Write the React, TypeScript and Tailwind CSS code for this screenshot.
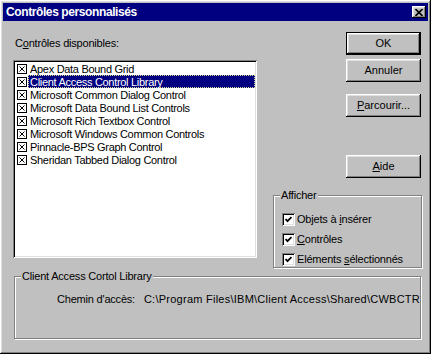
const CONTROLS = [
  "Apex Data Bound Grid",
  "Client Access Control Library",
  "Microsoft Common Dialog Control",
  "Microsoft Data Bound List Controls",
  "Microsoft Rich Textbox Control",
  "Microsoft Windows Common Controls",
  "Pinnacle-BPS Graph Control",
  "Sheridan Tabbed Dialog Control",
];

const RAISED =
  "shadow-[inset_-1px_-1px_0_#000,inset_1px_1px_0_#fff,inset_-2px_-2px_0_#808080,inset_2px_2px_0_#dfdfdf]";
const SUNKEN =
  "shadow-[inset_1px_1px_0_#808080,inset_-1px_-1px_0_#fff,inset_2px_2px_0_#000,inset_-2px_-2px_0_#dfdfdf]";

function BoxGlyph() {
  // the little crossed box in front of each list entry
  return (
    <svg width="10" height="10" viewBox="0 0 10 10" className="shrink-0">
      <rect x="0.5" y="0.5" width="9" height="9" fill="#fff" stroke="#000" />
      <path d="M2.5 2.5 L7.5 7.5 M7.5 2.5 L2.5 7.5" stroke="#000" strokeWidth="1" />
    </svg>
  );
}

function Button({
  children,
  primary = false,
  className = "",
}: {
  children: React.ReactNode;
  primary?: boolean;
  className?: string;
}) {
  return (
    <button
      className={`w-[75px] h-[23px] bg-[#c0c0c0] text-black text-[11px] leading-none ${RAISED} ${
        primary ? "border border-black" : ""
      } ${className}`}
    >
      {children}
    </button>
  );
}

function Check({ children }: { children: React.ReactNode }) {
  return (
    <div className="flex items-center h-[13px]">
      <div className={`w-[13px] h-[13px] bg-white flex items-center justify-center ${SUNKEN}`}>
        <svg width="7" height="7" viewBox="0 0 7 7">
          <path d="M0.5 3 L2.5 5.2 L6.5 1" stroke="#000" strokeWidth="1.8" fill="none" />
        </svg>
      </div>
      <span className="ml-[2px] text-[11px] leading-[13px] tracking-[-0.2px]">{children}</span>
    </div>
  );
}

function Group({ title, className, children }: { title: string; className: string; children: React.ReactNode }) {
  return (
    <div
      className={`relative border border-[#808080] shadow-[inset_1px_1px_0_#fff,1px_1px_0_#fff] ${className}`}
    >
      <span className="absolute -top-[7px] left-[6px] px-[1px] bg-[#c0c0c0] text-[11px] leading-[13px] tracking-[-0.2px]">
        {title}
      </span>
      {children}
    </div>
  );
}

export default function App() {
  return (
    <div className="w-[435px] h-[357px] bg-white font-['Liberation_Sans',Arial,sans-serif] text-black">
      <div className={`w-[431px] h-[354px] bg-[#c0c0c0] flex flex-col pt-[3px] ${RAISED}`}>
        {/* title bar */}
        <div className="mx-[3px] h-[18px] bg-[#000080] flex items-center pl-[3px] pr-[2px]">
          <span className="text-white font-bold text-[12px] leading-none tracking-[-0.4px]">
            Contrôles personnalisés
          </span>
          <div className={`ml-auto w-[14px] h-[12px] bg-[#c0c0c0] flex items-center justify-center ${RAISED}`}>
            <svg width="8" height="7" viewBox="0 0 8 7">
              <path d="M0.5 0 L7.5 7 M7.5 0 L0.5 7" stroke="#000" strokeWidth="1.6" />
            </svg>
          </div>
        </div>

        <div className="flex">
          {/* left: list */}
          <div className="ml-[13px] w-[244px] pt-[16px]">
            <div className="pl-[2px] text-[11px] leading-[13px] tracking-[-0.2px]">
              C<span className="underline">o</span>ntrôles disponibles:
            </div>
            <div className={`mt-[10px] h-[198px] bg-white p-[2px] ${SUNKEN}`}>
              {CONTROLS.map((c, i) => (
                <div key={c} className="flex items-center h-[13px] pl-[2px]">
                  <BoxGlyph />
                  <span
                    className={`ml-[1px] flex-1 h-[13px] pl-[1px] text-[11px] leading-[12px] tracking-[-0.3px] whitespace-nowrap ${
                      i === 1
                        ? "bg-[#000080] text-white border border-dotted border-[#d8d890]"
                        : "border border-transparent"
                    }`}
                  >
                    {c}
                  </span>
                </div>
              ))}
            </div>
          </div>

          {/* right: buttons and options */}
          <div className="ml-[16px] w-[149px] pt-[11px] flex flex-col items-end">
            <Button primary className="mr-[1px]">OK</Button>
            <Button className="mt-[4px] mr-[1px]">Annuler</Button>
            <Button className="mt-[12px] mr-[1px]">
              <span className="underline">P</span>arcourir...
            </Button>
            <Button className="mt-[38px] mr-[1px]">
              <span className="underline">A</span>ide
            </Button>
            <Group title="Afficher" className="mt-[17px] w-[149px] h-[73px]">
              <div className="pl-[8px] pt-[17px] flex flex-col gap-[7px]">
                <Check>
                  Objets à <span className="underline">i</span>nsérer
                </Check>
                <Check>
                  <span className="underline">C</span>ontrôles
                </Check>
                <Check>
                  Eléments <span className="underline">s</span>électionnés
                </Check>
              </div>
            </Group>
          </div>
        </div>

        <Group title="Client Access Cortol Library" className="mt-[8px] ml-[14px] w-[407px] h-[63px]">
          <div className="flex pt-[16px] pl-[42px] text-[11px] leading-[13px]">
            <span className="w-[90px] tracking-[-0.2px]">Chemin d'accès:</span>
            <span className="whitespace-nowrap tracking-[0.25px]">
              C:\Program Files\IBM\Client Access\Shared\CWBCTR
            </span>
          </div>
        </Group>
      </div>
    </div>
  );
}
